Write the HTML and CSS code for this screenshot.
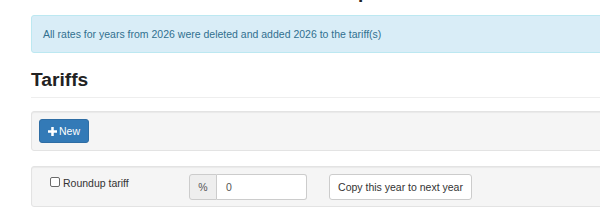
FILE: index.html
```html
<!DOCTYPE html>
<html>
<head>
<meta charset="utf-8">
<link rel="stylesheet" href="styles.css">
</head>
<body>
<div class="page">
  <span class="desc">p</span>
  <div class="alert">All rates for years from 2026 were deleted and added 2026 to the tariff(s)</div>
  <h3 class="page-header">Tariffs</h3>
  <div class="well">
    <button class="btn btn-primary"><svg class="plus" viewBox="0 0 10 10" width="9" height="9"><path d="M3.6 0h2.8v3.6H10v2.8H6.4V10H3.6V6.4H0V3.6h3.6z" fill="#fff"/></svg>New</button>
  </div>
  <div class="well well-row">
    <div class="check-col">
      <label class="check"><span class="box"></span>Roundup tariff</label>
    </div>
    <div class="input-group">
      <span class="addon">%</span>
      <span class="input">0</span>
    </div>
    <button class="btn btn-default">Copy this year to next year</button>
  </div>
</div>
</body>
</html>
```

FILE: styles.css
```css
html, body {
  margin: 0;
  padding: 0;
  background: #fff;
  overflow: hidden;
}
body {
  font-family: "Liberation Sans", Arial, sans-serif;
  font-size: 10.5px;
  line-height: 16px;
  color: #333;
}
.page {
  position: relative;
  width: 800px;
  padding: 15px 0 0 31px;
}
.desc {
  position: absolute;
  left: 358px;
  top: -18px;
  font-size: 19px;
  line-height: 20px;
  font-weight: bold;
  color: #222;
}
.alert {
  padding: 10px 11px;
  border: 1px solid #bce8f1;
  border-radius: 3px;
  background: #d9edf7;
  color: #31708f;
}
.page-header {
  margin: 16px 0 0;
  padding-bottom: 7px;
  border-bottom: 1px solid #eee;
  font-size: 19.2px;
  line-height: 21px;
  font-weight: bold;
  color: #222;
}
.well {
  margin-top: 13px;
  padding: 7px;
  background: #f5f5f5;
  border: 1px solid #e3e3e3;
  border-radius: 3px;
  box-shadow: inset 0 1px 1px rgba(0,0,0,0.05);
}
.well-row {
  margin-top: 15px;
  display: flex;
  align-items: flex-start;
  padding-bottom: 6px;
}
.btn {
  font-family: inherit;
  display: inline-flex;
  align-items: center;
  border-radius: 3px;
  margin: 0;
  cursor: pointer;
}
.btn-primary {
  height: 24px;
  padding: 0 8px;
  font-size: 10.5px;
  background: #337ab7;
  border: 1px solid #2e6da4;
  color: #fff;
}
.plus {
  margin-right: 2px;
}
.check-col {
  width: 139px;
  padding-left: 11px;
}
.check {
  display: flex;
  align-items: center;
  height: 16px;
  margin-top: 1px;
}
.box {
  width: 8px;
  height: 8px;
  border: 1px solid #6a6a6a;
  border-radius: 2px;
  background: #fff;
  margin-right: 3px;
  margin-top: -2px;
}
.input-group {
  display: flex;
  width: 118px;
  height: 26px;
}
.addon {
  width: 26px;
  display: flex;
  align-items: center;
  justify-content: center;
  background: #eee;
  border: 1px solid #ccc;
  border-radius: 3px 0 0 3px;
  color: #555;
}
.input {
  flex: 1;
  display: flex;
  align-items: center;
  padding-left: 9px;
  background: #fff;
  border: 1px solid #ccc;
  border-left: 0;
  border-radius: 0 3px 3px 0;
  color: #555;
}
.btn-default {
  margin-left: 22px;
  height: 26px;
  width: 143px;
  justify-content: center;
  padding: 0;
  font-size: 10.5px;
  background: #fff;
  border: 1px solid #ccc;
  color: #333;
}
```
